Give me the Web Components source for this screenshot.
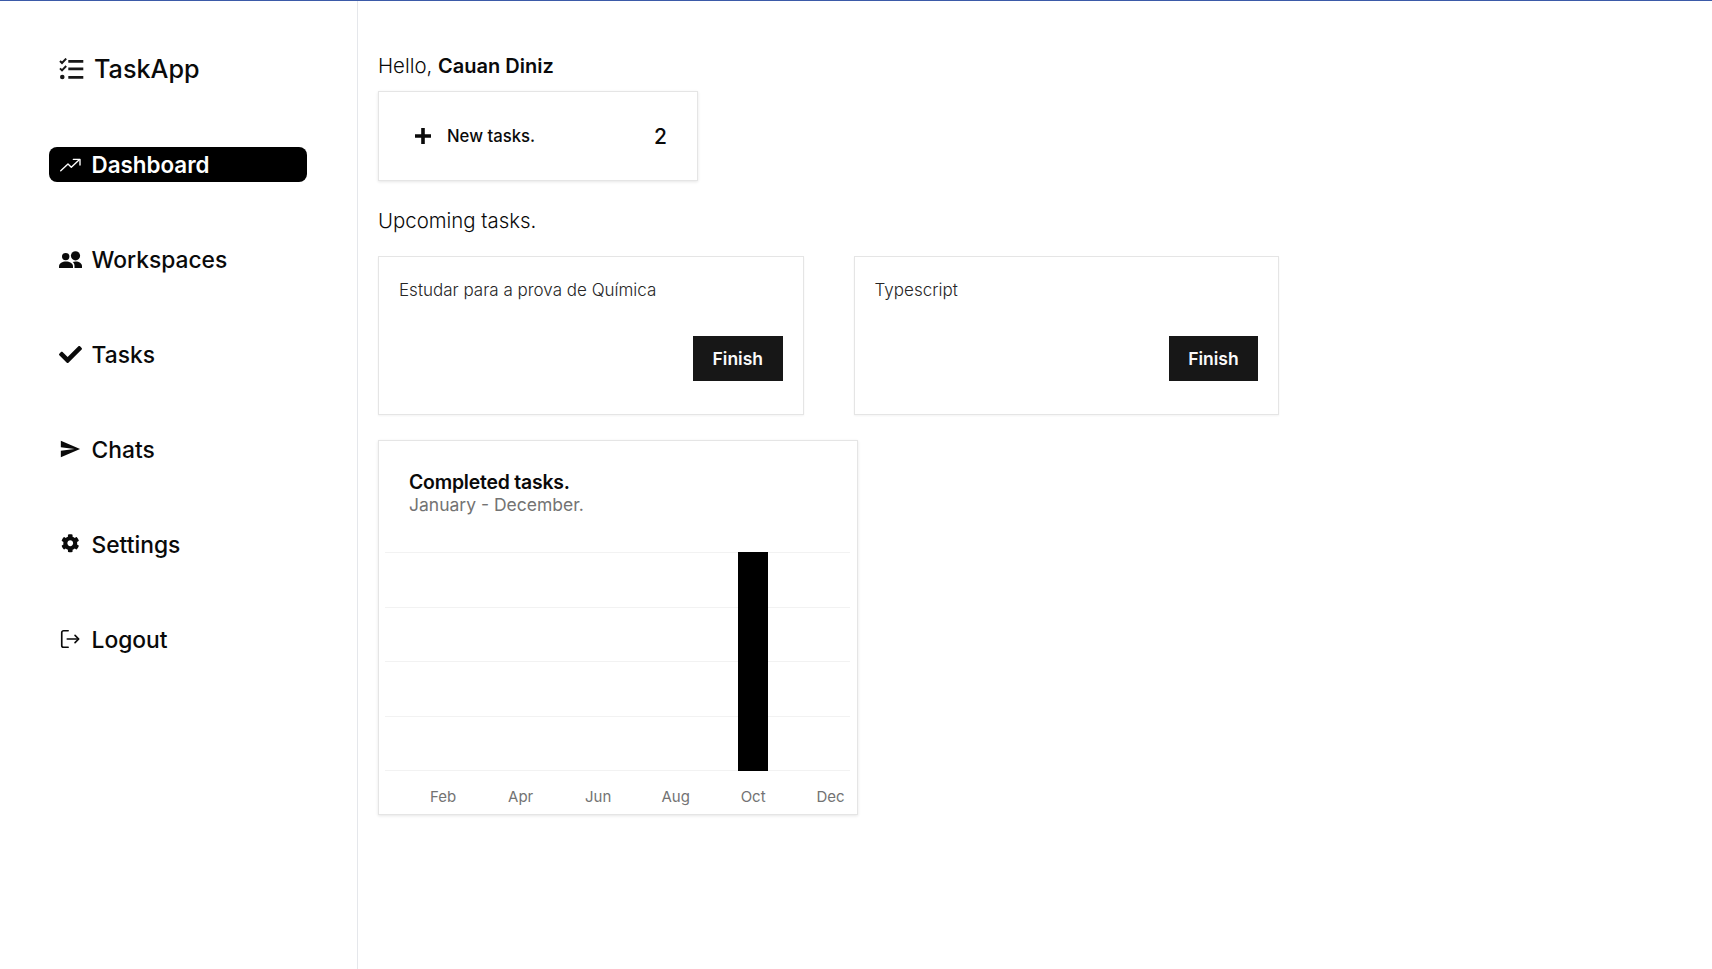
<!DOCTYPE html>
<html>
<head>
<meta charset="utf-8">
<title>TaskApp</title>
<style>
  html, body { margin: 0; height: 100%; }
  body { font-family: Inter, "Liberation Sans", sans-serif; color: #0a0a0a; background: #fff; }
</style>
</head>
<body>
<task-app>
  <side-bar slot="side">
    <brand-logo>TaskApp</brand-logo>
    <nav-item icon="trend" active>Dashboard</nav-item>
    <nav-item icon="users">Workspaces</nav-item>
    <nav-item icon="check">Tasks</nav-item>
    <nav-item icon="send">Chats</nav-item>
    <nav-item icon="cog">Settings</nav-item>
    <nav-item icon="logout">Logout</nav-item>
  </side-bar>
  <dash-board>
    <stat-card count="2">New tasks.</stat-card>
    <task-card slot="tasks">Estudar para a prova de Química</task-card>
    <task-card slot="tasks">Typescript</task-card>
    <bar-chart slot="chart"></bar-chart>
  </dash-board>
</task-app>

<script>
const ICONS = {
  trend: '<svg viewBox="0 0 24 24" fill="none" stroke="currentColor" stroke-width="1.5" stroke-linecap="round" stroke-linejoin="round"><path d="M1.9 18.2L9.8 10.9l3.6 3.6L21.8 6.5"/><path d="M15.6 5.8H22.9V12"/></svg>',
  users: '<svg viewBox="0 0 23 17" style="height:17px;width:23px" fill="currentColor"><circle cx="6.7" cy="5.6" r="3.7"/><circle cx="16.5" cy="4.8" r="4.6"/><path d="M0 17v-1.5C0 12 3.5 10.5 7 10.5s7 1.5 7 5V17z"/><path d="M15.5 17v-2c0-1.7-.6-3-1.8-4 1-.4 2-.6 3-.6 3.5 0 6.3 1.8 6.3 4.6V17z"/></svg>',
  check: '<svg viewBox="0 0 512 512" style="width:23px;height:23px" fill="currentColor"><path d="M173.898 439.404l-166.4-166.4c-9.997-9.997-9.997-26.206 0-36.204l36.203-36.204c9.997-9.998 26.207-9.998 36.204 0L192 312.69 432.095 72.596c9.997-9.997 26.207-9.997 36.204 0l36.203 36.204c9.997 9.997 9.997 26.206 0 36.204l-294.4 294.401c-9.998 9.997-26.207 9.997-36.204-.001z"/></svg>',
  send: '<svg viewBox="0 0 24 24" style="transform:translateY(-1px)" fill="currentColor"><path d="M2.01 21L23 12 2.01 3 2 10l15 2-15 2z"/></svg>',
  cog: '<svg viewBox="0 0 512 512" style="width:18.5px;height:18.5px;transform:translateY(-1px)" fill="currentColor"><path d="M487.4 315.7l-42.6-24.6c4.3-23.2 4.3-47 0-70.2l42.6-24.6c4.9-2.8 7.1-8.6 5.5-14-11.1-35.6-30-67.8-54.7-94.6-3.8-4.1-10-5.1-14.8-2.3L380.8 110c-17.9-15.4-38.5-27.3-60.8-35.1V25.8c0-5.6-3.9-10.5-9.4-11.7-36.7-8.2-74.3-7.8-109.2 0-5.5 1.2-9.4 6.1-9.4 11.7V75c-22.2 7.9-42.8 19.8-60.8 35.1L88.7 85.5c-4.9-2.8-11-1.9-14.8 2.3-24.7 26.7-43.6 58.9-54.7 94.6-1.7 5.4.6 11.2 5.5 14L67.3 221c-4.3 23.2-4.3 47 0 70.2l-42.6 24.6c-4.9 2.8-7.1 8.6-5.5 14 11.1 35.6 30 67.8 54.7 94.6 3.8 4.1 10 5.1 14.8 2.3l42.6-24.6c17.9 15.4 38.5 27.3 60.8 35.1v49.2c0 5.6 3.9 10.5 9.4 11.7 36.7 8.2 74.3 7.8 109.2 0 5.5-1.2 9.4-6.1 9.4-11.7v-49.2c22.2-7.9 42.8-19.8 60.8-35.1l42.6 24.6c4.9 2.8 11 1.9 14.8-2.3 24.7-26.7 43.6-58.9 54.7-94.6 1.5-5.5-.7-11.3-5.6-14.1zM256 336c-44.1 0-80-35.9-80-80s35.9-80 80-80 80 35.9 80 80-35.9 80-80 80z"/></svg>',
  logout: '<svg viewBox="0 0 24 24" style="transform:translateY(-1px)" fill="none" stroke="currentColor" stroke-width="1.8" stroke-linecap="round" stroke-linejoin="round"><path d="M10 3H5a2 2 0 0 0-2 2v14a2 2 0 0 0 2 2h5"/><path d="M9 12h12"/><path d="M17.5 8l4 4-4 4"/></svg>'
};

class TaskApp extends HTMLElement {
  connectedCallback() {
    this.attachShadow({ mode: 'open' });
    this.shadowRoot.innerHTML = `
      <style>
        :host { display: flex; min-height: 100vh; box-sizing: border-box; border-top: 1px solid #3b5aa8; }
        main { flex: 1; min-width: 0; }
      </style>
      <slot name="side"></slot>
      <main><slot></slot></main>
    `;
  }
}

class SideBar extends HTMLElement {
  connectedCallback() {
    this.attachShadow({ mode: 'open' });
    this.shadowRoot.innerHTML = `
      <style>
        :host {
          display: flex;
          flex-direction: column;
          width: 358px;
          flex: none;
          box-sizing: border-box;
          border-right: 1px solid #e5e7eb;
          padding: 50px 0 0 49px;
        }
      </style>
      <slot></slot>
    `;
  }
}

class BrandLogo extends HTMLElement {
  connectedCallback() {
    this.attachShadow({ mode: 'open' });
    this.shadowRoot.innerHTML = `
      <style>
        :host {
          display: flex;
          align-items: center;
          gap: 9px;
          height: 36px;
          margin-bottom: 60px;
          padding-left: 10px;
          font-size: 25.2px;
          font-weight: 500;
        }
        svg { width: 26px; height: 22px; flex: none; }
      </style>
      <svg viewBox="0 0 26 22" fill="none" stroke="#171717">
        <path d="M9.3 3.3H24.3M9.3 10.8H24.3M9.3 19.3H24.3" stroke-width="2.7"/>
        <path d="M1 3l2 2L7.2 .6M1 10.4l2 2 4.2-4.4" stroke-width="2"/>
        <circle cx="3.3" cy="19" r="2.3" fill="#171717" stroke="none"/>
      </svg>
      <span><slot></slot></span>
    `;
  }
}

class NavItem extends HTMLElement {
  connectedCallback() {
    this.attachShadow({ mode: 'open' });
    const icon = ICONS[this.getAttribute('icon')] || '';
    this.shadowRoot.innerHTML = `
      <style>
        :host {
          display: flex;
          align-items: center;
          width: 258px;
          height: 35px;
          margin-bottom: 60px;
          box-sizing: border-box;
          padding-left: 10px;
          border-radius: 8px;
          font-size: 22.8px;
          font-weight: 500;
          color: #0a0a0a;
        }
        :host([active]) { background: #000; color: #fff; font-weight: 600; font-size: 22.4px; }
        .ico { width: 22px; height: 22px; margin-right: 10.5px; flex: none; display: flex; align-items: center; justify-content: center; }
        svg { width: 22px; height: 22px; display: block; flex: none; }
      </style>
      <span class="ico">${icon}</span>
      <span><slot></slot></span>
    `;
  }
}

class DashBoard extends HTMLElement {
  connectedCallback() {
    this.attachShadow({ mode: 'open' });
    this.shadowRoot.innerHTML = `
      <style>
        :host { display: block; padding: 50px 0 0 20px; }
        h2 { margin: 0; font-size: 20.4px; font-weight: 300; line-height: 30px; color: #0a0a0a; }
        b { font-weight: 600; font-size: 20px; }
        .hello { margin-bottom: 10px; }
        .upcoming { margin: 25px 0 20px; }
        .tasks { display: flex; gap: 50px; margin-bottom: 25px; }
      </style>
      <h2 class="hello">Hello, <b>Cauan Diniz</b></h2>
      <slot></slot>
      <h2 class="upcoming">Upcoming tasks.</h2>
      <div class="tasks"><slot name="tasks"></slot></div>
      <slot name="chart"></slot>
    `;
  }
}

class StatCard extends HTMLElement {
  connectedCallback() {
    this.attachShadow({ mode: 'open' });
    this.shadowRoot.innerHTML = `
      <style>
        :host {
          display: flex;
          align-items: center;
          width: 320px;
          height: 90px;
          box-sizing: border-box;
          padding: 0 30px 0 36px;
          background: #fff;
          border: 1px solid #e5e5e5;
          box-shadow: 0 1px 3px rgba(0,0,0,.1);
          font-size: 16.7px;
          font-weight: 500;
        }
        svg { width: 16px; height: 16px; flex: none; margin-right: 16px; }
        .label { flex: 1; }
        .count { font-size: 21px; font-weight: 500; }
      </style>
      <svg viewBox="0 0 16 16" fill="none" stroke="#0a0a0a" stroke-width="3.6"><path d="M8 0V16M0 8H16"/></svg>
      <span class="label"><slot></slot></span>
      <span class="count">${this.getAttribute('count')}</span>
    `;
  }
}

class TaskCard extends HTMLElement {
  connectedCallback() {
    this.attachShadow({ mode: 'open' });
    this.shadowRoot.innerHTML = `
      <style>
        :host {
          display: flex;
          flex-direction: column;
          width: 425.6px;
          height: 159px;
          box-sizing: border-box;
          padding: 21px 20px 33px;
          background: #fff;
          border: 1px solid #e5e5e5;
          box-shadow: 0 1px 2px rgba(0,0,0,.05);
        }
        p { margin: 0; flex: 1; font-size: 17px; font-weight: 300; line-height: 24px; color: #262626; }
        button {
          align-self: flex-end;
          width: 89.6px;
          height: 45px;
          padding: 0;
          border: 0;
          border-radius: 0;
          background: #171717;
          color: #fafafa;
          font: 600 17.5px Inter, "Liberation Sans", sans-serif;
        }
      </style>
      <p><slot></slot></p>
      <button>Finish</button>
    `;
  }
}

class BarChart extends HTMLElement {
  connectedCallback() {
    this.attachShadow({ mode: 'open' });
    const months = ['', 'Feb', '', 'Apr', '', 'Jun', '', 'Aug', '', 'Oct', '', 'Dec'];
    this.shadowRoot.innerHTML = `
      <style>
        :host {
          display: block;
          width: 480px;
          height: 375px;
          box-sizing: border-box;
          padding: 29px 7px 0 6px;
          background: #fff;
          border: 1px solid #e5e5e5;
          box-shadow: 0 1px 3px rgba(0,0,0,.1);
        }
        header { padding-left: 24px; height: 82px; }
        h3 { margin: 0; font-size: 19.4px; line-height: 24px; font-weight: 600; letter-spacing: -.2px; color: #0a0a0a; }
        header p { margin: 0; font-size: 17.5px; line-height: 22px; color: #737373; }
        .plot { position: relative; height: 219px; display: grid; grid-template-columns: repeat(12, 1fr); }
        .lines { position: absolute; inset: 0; display: flex; flex-direction: column; justify-content: space-between; }
        .lines i { display: block; height: 1px; background: #f2f2f2; }
        .bar { position: relative; grid-column: 10; justify-self: center; width: 30px; background: #000; }
        .axis { display: grid; grid-template-columns: repeat(12, 1fr); margin-top: 16px; }
        .axis span { text-align: center; white-space: nowrap; font-size: 15px; line-height: 20px; color: #737373; }
      </style>
      <header>
        <h3>Completed tasks.</h3>
        <p>January - December.</p>
      </header>
      <div class="plot">
        <div class="lines"><i></i><i></i><i></i><i></i><i></i></div>
        <div class="bar"></div>
      </div>
      <div class="axis">${months.map(m => `<span>${m}</span>`).join('')}</div>
    `;
  }
}

customElements.define('task-app', TaskApp);
customElements.define('side-bar', SideBar);
customElements.define('brand-logo', BrandLogo);
customElements.define('nav-item', NavItem);
customElements.define('dash-board', DashBoard);
customElements.define('stat-card', StatCard);
customElements.define('task-card', TaskCard);
customElements.define('bar-chart', BarChart);
</script>
</body>
</html>
